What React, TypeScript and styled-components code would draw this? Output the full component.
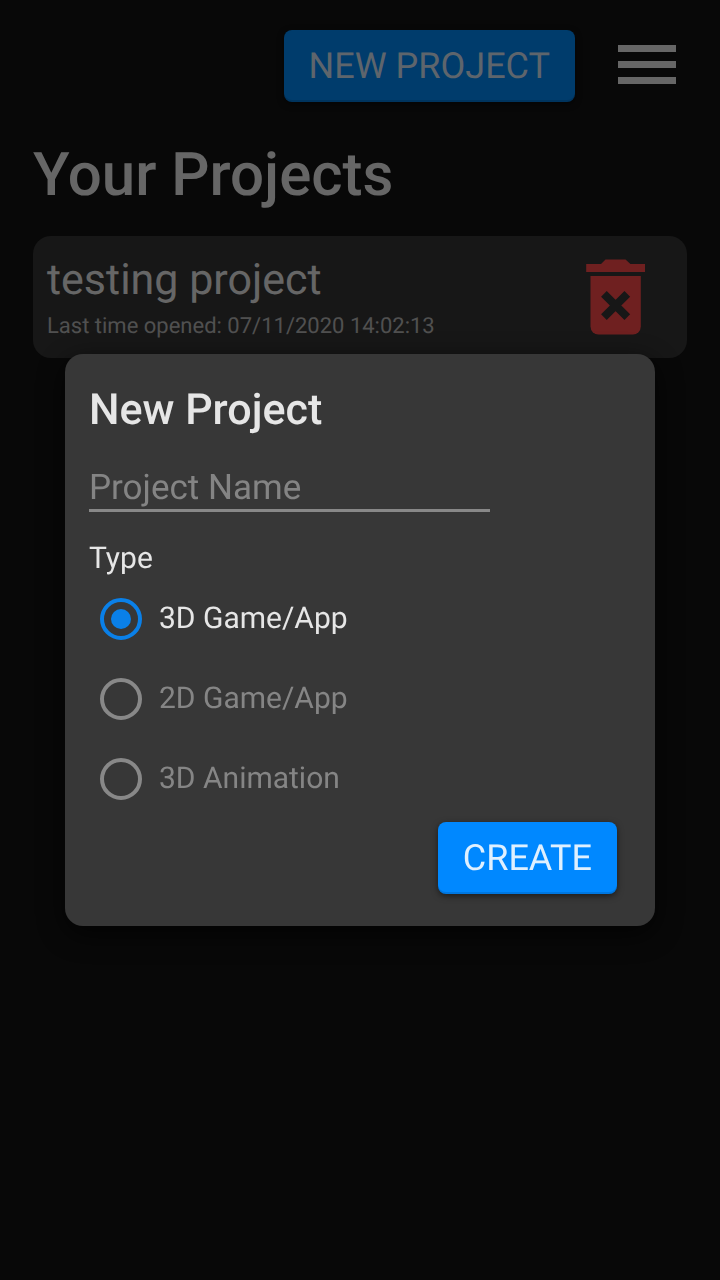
import React, { useState } from "react";
import styled, { createGlobalStyle } from "styled-components";

const GlobalStyle = createGlobalStyle`
  * { box-sizing: border-box; }
  body {
    margin: 0;
    background: #101010;
    color: #cccccc;
    font-family: Roboto, "Liberation Sans", sans-serif;
    text-rendering: geometricPrecision;
  }
  button, input { font-family: inherit; text-rendering: inherit; }
`;

const Page = styled.main`
  min-height: 100vh;
  padding: 30px 33px;
`;

const Toolbar = styled.header`
  display: flex;
  justify-content: flex-end;
  align-items: flex-start;
  gap: 43px;
  padding-right: 11px;
`;

const RaisedButton = styled.button<{ $background?: string; $color?: string }>`
  height: 72px;
  padding: 0 25px;
  border: 0;
  border-radius: 8px;
  background: ${(p) => p.$background ?? "#0088ff"};
  box-shadow: inset 0 -2px 0 rgba(0, 0, 0, 0.12), 0 2px 6px rgba(0, 0, 0, 0.5);
  color: ${(p) => p.$color ?? "#dff0ff"};
  font-size: 36px;
  line-height: 42px;
  white-space: nowrap;
`;

const MenuButton = styled.button`
  display: flex;
  flex-direction: column;
  gap: 9px;
  width: 58px;
  padding: 15px 0 0;
  border: 0;
  background: none;
`;

const MenuBar = styled.span`
  height: 7px;
  background: #cccccc;
`;

const PageTitle = styled.h1`
  margin: 37px 0 25px;
  color: #cccccc;
  font-size: 60px;
  font-weight: 500;
  line-height: 72px;
`;

const ProjectCard = styled.article`
  display: flex;
  justify-content: space-between;
  align-items: center;
  height: 122px;
  padding: 0 41px 0 14px;
  border-radius: 18px;
  background: #2e2e2e;
`;

const ProjectName = styled.h2`
  margin: 0;
  color: #cccccc;
  font-size: 43px;
  font-weight: 400;
  line-height: 52px;
`;

const ProjectDate = styled.p`
  margin: 8px 0 0;
  color: #a0a0a0;
  font-size: 22px;
  line-height: 26px;
`;

const IconButton = styled.button`
  display: flex;
  padding: 0;
  border: 0;
  background: none;
`;

const Scrim = styled.div`
  position: fixed;
  inset: 0;
  display: flex;
  justify-content: center;
  align-items: center;
  padding: 0 65px;
  background: rgba(0, 0, 0, 0.5);
`;

const Dialog = styled.form`
  display: flex;
  flex-direction: column;
  width: 100%;
  max-width: 720px;
  padding: 30px 38px 32px 24px;
  border-radius: 18px;
  background: #373737;
  box-shadow: 0 8px 28px rgba(0, 0, 0, 0.7);
`;

const DialogTitle = styled.h2`
  margin: 0;
  color: #e6e6e6;
  font-size: 43px;
  font-weight: 500;
  line-height: 52px;
`;

const NameInput = styled.input`
  width: 76%;
  height: 50px;
  margin: 26px 0 0;
  padding: 4px 0 0;
  border: 0;
  border-bottom: 3px solid #888888;
  border-radius: 0;
  outline: 0;
  background: none;
  color: #e6e6e6;
  font-size: 35px;
  &::placeholder { color: #848484; opacity: 1; }
`;

const TypeGroup = styled.fieldset`
  margin: 28px 0 0;
  padding: 0;
  border: 0;
`;

const TypeLegend = styled.legend`
  padding: 0;
  color: #e6e6e6;
  font-size: 30px;
  line-height: 38px;
`;

const TypeOption = styled.label<{ $active: boolean }>`
  display: flex;
  align-items: center;
  gap: 17px;
  height: 80px;
  padding: 1px 0 0 11px;
  color: ${(p) => (p.$active ? "#e6e6e6" : "#858585")};
  font-size: 30px;
  line-height: 36px;
`;

const Radio = styled.input`
  appearance: none;
  display: grid;
  place-items: center;
  width: 42px;
  height: 42px;
  margin: 0;
  border: 4px solid #888888;
  border-radius: 50%;
  &:checked { border-color: #0a80e8; }
  &:checked::before {
    content: "";
    width: 20px;
    height: 20px;
    border-radius: 50%;
    background: #0a80e8;
  }
`;

const Actions = styled.div`
  display: flex;
  justify-content: flex-end;
  margin-top: 4px;
`;

const TrashIcon = () => (
  <svg width="60" height="76" viewBox="0 0 60 76" aria-hidden="true">
    <path d="M0.2 5H15L19.5 0.6H39.5L44.4 5H59V13H0.2Z" fill="#de4040" />
    <path d="M4.5 17H54.8V67.5A8 8 0 0 1 46.8 75.5H12.5A8 8 0 0 1 4.5 67.5Z" fill="#de4040" />
    <path d="M17.9 34.8L41.3 58.2M41.3 34.8L17.9 58.2" stroke="#2e2e2e" strokeWidth="8" />
  </svg>
);

const projectTypes = ["3D Game/App", "2D Game/App", "3D Animation"];

export default function App() {
  const [type, setType] = useState(projectTypes[0]);

  return (
    <>
      <GlobalStyle />
      <Page>
        <Toolbar>
          <RaisedButton type="button" $background="#0078d8" $color="#bccad8">
            NEW PROJECT
          </RaisedButton>
          <MenuButton type="button" aria-label="Menu">
            <MenuBar />
            <MenuBar />
            <MenuBar />
          </MenuButton>
        </Toolbar>
        <PageTitle>Your Projects</PageTitle>
        <ProjectCard>
          <div>
            <ProjectName>testing project</ProjectName>
            <ProjectDate>Last time opened: 07/11/2020 14:02:13</ProjectDate>
          </div>
          <IconButton type="button" aria-label="Delete project">
            <TrashIcon />
          </IconButton>
        </ProjectCard>
      </Page>
      <Scrim>
        <Dialog
          role="dialog"
          aria-modal="true"
          aria-labelledby="dialog-title"
          onSubmit={(e) => e.preventDefault()}
        >
          <DialogTitle id="dialog-title">New Project</DialogTitle>
          <NameInput type="text" placeholder="Project Name" aria-label="Project Name" />
          <TypeGroup>
            <TypeLegend>Type</TypeLegend>
            {projectTypes.map((name) => (
              <TypeOption key={name} $active={name === type}>
                <Radio
                  type="radio"
                  name="project-type"
                  checked={name === type}
                  onChange={() => setType(name)}
                />
                {name}
              </TypeOption>
            ))}
          </TypeGroup>
          <Actions>
            <RaisedButton type="submit">CREATE</RaisedButton>
          </Actions>
        </Dialog>
      </Scrim>
    </>
  );
}
